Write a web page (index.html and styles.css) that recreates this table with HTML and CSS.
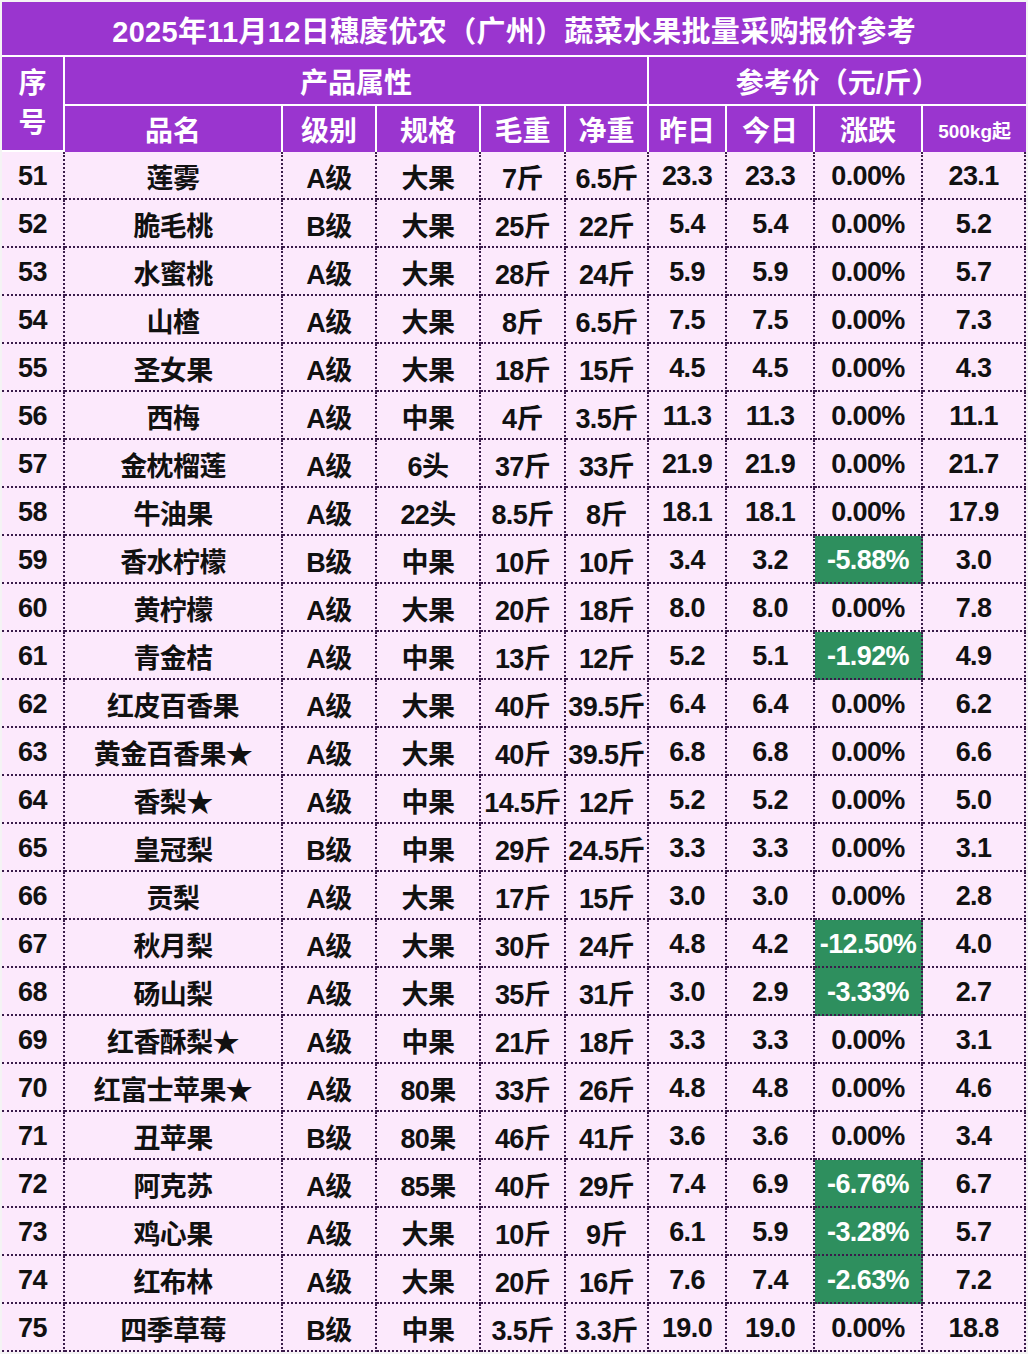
FILE: index.html
```html
<!DOCTYPE html>
<html lang="zh-CN">
<head>
<meta charset="utf-8">
<title>报价参考</title>
<link rel="stylesheet" href="styles.css">
</head>
<body>
<table class="sheet">
  <colgroup>
    <col class="c-no"><col class="c-name"><col class="c-grade"><col class="c-spec"><col class="c-gross"><col class="c-net"><col class="c-y"><col class="c-t"><col class="c-chg"><col class="c-bulk">
  </colgroup>
  <thead>
    <tr class="title-row"><th colspan="10">2025年11月12日穗庱优农（广州）蔬菜水果批量采购报价参考</th></tr>
    <tr class="head-1">
      <th rowspan="2" class="no-head">序<br>号</th>
      <th colspan="5">产品属性</th>
      <th colspan="4" class="last">参考价（元/斤）</th>
    </tr>
    <tr class="head-2">
      <th>品名</th><th>级别</th><th>规格</th><th>毛重</th><th>净重</th><th>昨日</th><th>今日</th><th>涨跌</th><th class="last small">500kg起</th>
    </tr>
  </thead>
  <tbody>
    <tr><td>51</td><td>莲雾</td><td>A级</td><td>大果</td><td>7斤</td><td>6.5斤</td><td>23.3</td><td>23.3</td><td>0.00%</td><td>23.1</td></tr>
    <tr><td>52</td><td>脆毛桃</td><td>B级</td><td>大果</td><td>25斤</td><td>22斤</td><td>5.4</td><td>5.4</td><td>0.00%</td><td>5.2</td></tr>
    <tr><td>53</td><td>水蜜桃</td><td>A级</td><td>大果</td><td>28斤</td><td>24斤</td><td>5.9</td><td>5.9</td><td>0.00%</td><td>5.7</td></tr>
    <tr><td>54</td><td>山楂</td><td>A级</td><td>大果</td><td>8斤</td><td>6.5斤</td><td>7.5</td><td>7.5</td><td>0.00%</td><td>7.3</td></tr>
    <tr><td>55</td><td>圣女果</td><td>A级</td><td>大果</td><td>18斤</td><td>15斤</td><td>4.5</td><td>4.5</td><td>0.00%</td><td>4.3</td></tr>
    <tr><td>56</td><td>西梅</td><td>A级</td><td>中果</td><td>4斤</td><td>3.5斤</td><td>11.3</td><td>11.3</td><td>0.00%</td><td>11.1</td></tr>
    <tr><td>57</td><td>金枕榴莲</td><td>A级</td><td>6头</td><td>37斤</td><td>33斤</td><td>21.9</td><td>21.9</td><td>0.00%</td><td>21.7</td></tr>
    <tr><td>58</td><td>牛油果</td><td>A级</td><td>22头</td><td>8.5斤</td><td>8斤</td><td>18.1</td><td>18.1</td><td>0.00%</td><td>17.9</td></tr>
    <tr><td>59</td><td>香水柠檬</td><td>B级</td><td>中果</td><td>10斤</td><td>10斤</td><td>3.4</td><td>3.2</td><td class="down">-5.88%</td><td>3.0</td></tr>
    <tr><td>60</td><td>黄柠檬</td><td>A级</td><td>大果</td><td>20斤</td><td>18斤</td><td>8.0</td><td>8.0</td><td>0.00%</td><td>7.8</td></tr>
    <tr><td>61</td><td>青金桔</td><td>A级</td><td>中果</td><td>13斤</td><td>12斤</td><td>5.2</td><td>5.1</td><td class="down">-1.92%</td><td>4.9</td></tr>
    <tr><td>62</td><td>红皮百香果</td><td>A级</td><td>大果</td><td>40斤</td><td>39.5斤</td><td>6.4</td><td>6.4</td><td>0.00%</td><td>6.2</td></tr>
    <tr><td>63</td><td>黄金百香果★</td><td>A级</td><td>大果</td><td>40斤</td><td>39.5斤</td><td>6.8</td><td>6.8</td><td>0.00%</td><td>6.6</td></tr>
    <tr><td>64</td><td>香梨★</td><td>A级</td><td>中果</td><td>14.5斤</td><td>12斤</td><td>5.2</td><td>5.2</td><td>0.00%</td><td>5.0</td></tr>
    <tr><td>65</td><td>皇冠梨</td><td>B级</td><td>中果</td><td>29斤</td><td>24.5斤</td><td>3.3</td><td>3.3</td><td>0.00%</td><td>3.1</td></tr>
    <tr><td>66</td><td>贡梨</td><td>A级</td><td>大果</td><td>17斤</td><td>15斤</td><td>3.0</td><td>3.0</td><td>0.00%</td><td>2.8</td></tr>
    <tr><td>67</td><td>秋月梨</td><td>A级</td><td>大果</td><td>30斤</td><td>24斤</td><td>4.8</td><td>4.2</td><td class="down">-12.50%</td><td>4.0</td></tr>
    <tr><td>68</td><td>砀山梨</td><td>A级</td><td>大果</td><td>35斤</td><td>31斤</td><td>3.0</td><td>2.9</td><td class="down">-3.33%</td><td>2.7</td></tr>
    <tr><td>69</td><td>红香酥梨★</td><td>A级</td><td>中果</td><td>21斤</td><td>18斤</td><td>3.3</td><td>3.3</td><td>0.00%</td><td>3.1</td></tr>
    <tr><td>70</td><td>红富士苹果★</td><td>A级</td><td>80果</td><td>33斤</td><td>26斤</td><td>4.8</td><td>4.8</td><td>0.00%</td><td>4.6</td></tr>
    <tr><td>71</td><td>丑苹果</td><td>B级</td><td>80果</td><td>46斤</td><td>41斤</td><td>3.6</td><td>3.6</td><td>0.00%</td><td>3.4</td></tr>
    <tr><td>72</td><td>阿克苏</td><td>A级</td><td>85果</td><td>40斤</td><td>29斤</td><td>7.4</td><td>6.9</td><td class="down">-6.76%</td><td>6.7</td></tr>
    <tr><td>73</td><td>鸡心果</td><td>A级</td><td>大果</td><td>10斤</td><td>9斤</td><td>6.1</td><td>5.9</td><td class="down">-3.28%</td><td>5.7</td></tr>
    <tr><td>74</td><td>红布林</td><td>A级</td><td>大果</td><td>20斤</td><td>16斤</td><td>7.6</td><td>7.4</td><td class="down">-2.63%</td><td>7.2</td></tr>
    <tr><td>75</td><td>四季草莓</td><td>B级</td><td>中果</td><td>3.5斤</td><td>3.3斤</td><td>19.0</td><td>19.0</td><td>0.00%</td><td>18.8</td></tr>
  </tbody>
</table>
</body>
</html>
```

FILE: styles.css
```css
html, body {
  margin: 0;
  padding: 0;
  background: #f4f4f4;
}
body {
  padding: 2px 2px 0 2px;
  font-family: "Liberation Sans", Arial, "Noto Sans CJK SC", sans-serif;
}
.sheet {
  width: 1024px;
  table-layout: fixed;
  border-collapse: separate;
  border-spacing: 0;
}
.c-no { width: 63px; }
.c-name { width: 218px; }
.c-grade { width: 94px; }
.c-spec { width: 104px; }
.c-gross { width: 85px; }
.c-net { width: 83px; }
.c-y { width: 78px; }
.c-t { width: 88px; }
.c-chg { width: 108px; }
.c-bulk { width: 103px; }

.sheet th {
  background: #9a35cf;
  color: #ffffff;
  font-weight: bold;
  text-align: center;
  padding: 0;
  border-right: 2px solid #ffffff;
  border-bottom: 2px solid #ffffff;
  white-space: nowrap;
  box-sizing: border-box;
}
.sheet th.last { border-right: none; }
.title-row th {
  height: 55px;
  font-size: 29px;
  border-right: none;
  letter-spacing: 0.3px;
}
.head-1 th {
  height: 49px;
  font-size: 28px;
}
.head-2 th {
  height: 46px;
  font-size: 28px;
  border-bottom: none;
}
.no-head {
  line-height: 40px;
}
.head-2 th.small {
  font-size: 19px;
}

.sheet td {
  background: #fce9fc;
  color: #111111;
  font-size: 27px;
  font-weight: bold;
  text-align: center;
  padding: 2px 0 0 0;
  height: 48px;
  box-sizing: border-box;
  border-right: 2px dotted #3a1c4a;
  border-bottom: 2px dotted #3a1c4a;
  white-space: nowrap;
  overflow: visible;
  letter-spacing: -0.6px;
}
.sheet td.down {
  background: #2e8f5e;
  color: #ffffff;
}
```
